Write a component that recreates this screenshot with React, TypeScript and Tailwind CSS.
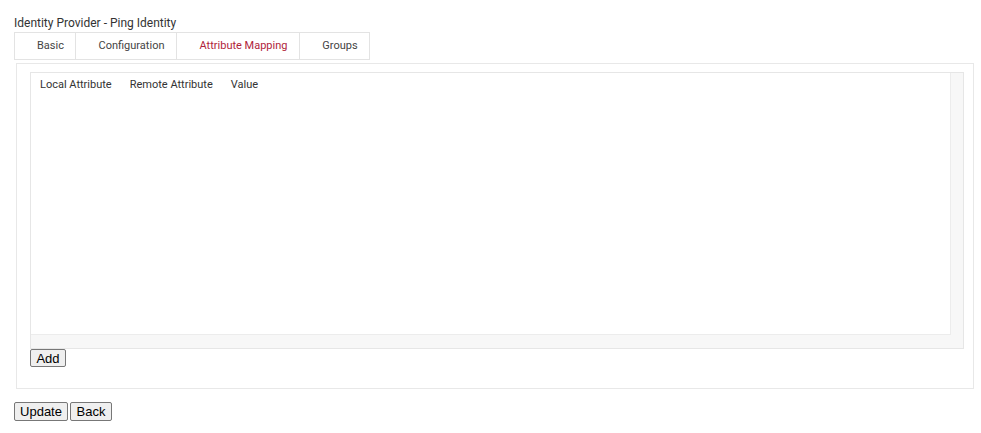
export default function App() {
  const tabs = [
    { label: 'Basic', w: 'w-[60px]' },
    { label: 'Configuration', w: 'w-[101px]' },
    { label: 'Attribute Mapping', w: 'w-[123px]' },
    { label: 'Groups', w: 'w-[70px]' },
  ]
  const active = 'Attribute Mapping'

  return (
    <div className="min-h-screen bg-white pl-[14px] pt-[16px] text-[#333] font-['Roboto',sans-serif]">
      <div className="text-[12px] leading-[15px]">Identity Provider - Ping Identity</div>

      {/* Tabs */}
      <div className="mt-[1px] flex h-[28px] w-fit border border-[#e3e3e3]">
        {tabs.map((t, i) => (
          <div
            key={t.label}
            className={`flex items-center justify-center pl-[11px] ${t.w} text-[11px] ${i > 0 ? 'border-l border-[#e3e3e3]' : ''} ${
              t.label === active ? 'text-[#b0243a]' : 'text-[#444]'
            }`}
          >
            {t.label}
          </div>
        ))}
      </div>

      {/* Panel */}
      <div className="mt-[3px] ml-[2px] w-[958px] h-[326px] border border-[#e8e8e8] pl-[13px] pt-[8px]">
        <div className="w-[934px] h-[277px] border border-[#e6e6e6] flex flex-col">
          <div className="flex flex-1">
            <div className="flex-1 border-r border-b border-[#ececec]">
              <div className="flex gap-[18px] pl-[9px] pt-[4px] text-[11px] text-[#333]">
                <span>Local Attribute</span>
                <span>Remote Attribute</span>
                <span>Value</span>
              </div>
            </div>
            <div className="w-[12px] bg-[#f7f7f7]" />
          </div>
          <div className="h-[13px] bg-[#f7f7f7]" />
        </div>
        <button className="block h-[18px] w-[36px] rounded-[2px] border border-[#777] bg-[#efefef] text-[13px] leading-[15px] text-black font-['Liberation_Sans',Arial,sans-serif]">
          Add
        </button>
      </div>

      <div className="mt-[13px] flex gap-[2px]">
        <button className="h-[19px] w-[54px] rounded-[2px] border border-[#777] bg-[#efefef] text-[13px] leading-[15px] text-black font-['Liberation_Sans',Arial,sans-serif]">
          Update
        </button>
        <button className="h-[19px] w-[42px] rounded-[2px] border border-[#777] bg-[#efefef] text-[13px] leading-[15px] text-black font-['Liberation_Sans',Arial,sans-serif]">
          Back
        </button>
      </div>
    </div>
  )
}
